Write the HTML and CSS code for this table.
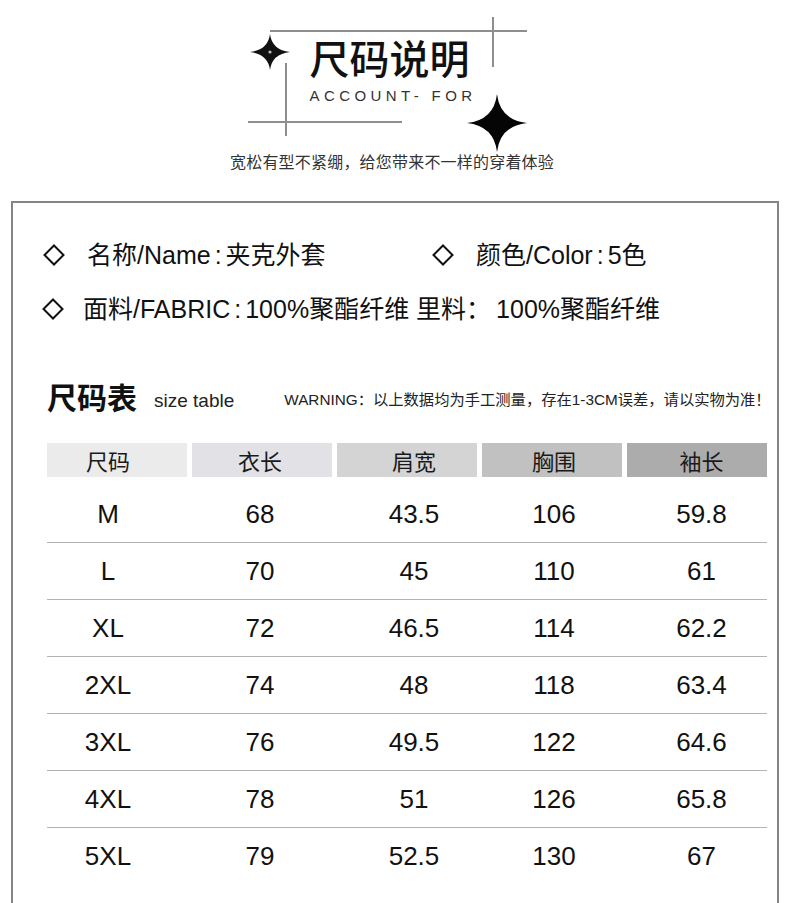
FILE: index.html
```html
<!DOCTYPE html>
<html lang="zh">
<head>
<meta charset="utf-8">
<title>尺码说明</title>
<link rel="stylesheet" href="styles.css">
</head>
<body>
<div class="page">
  <header class="hero">
    <span class="deco line-top"></span>
    <span class="deco line-right"></span>
    <span class="deco line-left"></span>
    <span class="deco line-bottom"></span>
    <svg class="deco star-small" viewBox="-20 -18 40 36" width="40" height="36"><path d="M0,-18 Q2,-2 20,0 Q2,2 0,18 Q-2,2 -20,0 Q-2,-2 0,-18Z" fill="#111"/><circle cx="0" cy="0" r="1.6" fill="#bbb"/></svg>
    <svg class="deco star-big" viewBox="-30 -29 60 58" width="60" height="58"><path d="M0,-29 Q3,-3 30,0 Q3,3 0,29 Q-3,3 -30,0 Q-3,-3 0,-29Z" fill="#050505"/></svg>
    <h1 class="hero-title">尺码说明</h1>
    <div class="hero-en">ACCOUNT- FOR</div>
    <p class="hero-sub">宽松有型不紧绷，给您带来不一样的穿着体验</p>
  </header>

  <section class="box">
    <div class="info-row">
      <div class="info-item first">
        <svg class="diamond" viewBox="0 0 22 22" width="22" height="22"><path d="M11,1.5 L20.5,11 L11,20.5 L1.5,11Z" fill="none" stroke="#111" stroke-width="2"/></svg>
        <span class="info-text">名称/Name<span class="colon">:</span>夹克外套</span>
      </div>
      <div class="info-item">
        <svg class="diamond" viewBox="0 0 22 22" width="22" height="22"><path d="M11,1.5 L20.5,11 L11,20.5 L1.5,11Z" fill="none" stroke="#111" stroke-width="2"/></svg>
        <span class="info-text">颜色/Color<span class="colon">:</span>5色</span>
      </div>
    </div>
    <div class="info-row second">
      <div class="info-item">
        <svg class="diamond" viewBox="0 0 22 22" width="22" height="22"><path d="M11,1.5 L20.5,11 L11,20.5 L1.5,11Z" fill="none" stroke="#111" stroke-width="2"/></svg>
        <span class="info-text">面料/FABRIC<span class="colon">:</span>100%聚酯纤维 里料：<span class="gap"></span>100%聚酯纤维</span>
      </div>
    </div>

    <div class="table-head">
      <h2 class="table-title">尺码表</h2>
      <span class="table-en">size table</span>
      <span class="table-warn">WARNING：以上数据均为手工测量，存在1-3CM误差，请以实物为准！</span>
    </div>

    <div class="size-table">
      <div class="th-row">
        <div class="th c1 bg1">尺码</div>
        <div class="th c2 bg2">衣长</div>
        <div class="th c3 bg3">肩宽</div>
        <div class="th c4 bg4">胸围</div>
        <div class="th c5 bg5">袖长</div>
      </div>
      <div class="tr"><div class="td c1">M</div><div class="td c2">68</div><div class="td c3">43.5</div><div class="td c4">106</div><div class="td c5">59.8</div></div>
      <div class="tr"><div class="td c1">L</div><div class="td c2">70</div><div class="td c3">45</div><div class="td c4">110</div><div class="td c5">61</div></div>
      <div class="tr"><div class="td c1">XL</div><div class="td c2">72</div><div class="td c3">46.5</div><div class="td c4">114</div><div class="td c5">62.2</div></div>
      <div class="tr"><div class="td c1">2XL</div><div class="td c2">74</div><div class="td c3">48</div><div class="td c4">118</div><div class="td c5">63.4</div></div>
      <div class="tr"><div class="td c1">3XL</div><div class="td c2">76</div><div class="td c3">49.5</div><div class="td c4">122</div><div class="td c5">64.6</div></div>
      <div class="tr"><div class="td c1">4XL</div><div class="td c2">78</div><div class="td c3">51</div><div class="td c4">126</div><div class="td c5">65.8</div></div>
      <div class="tr last"><div class="td c1">5XL</div><div class="td c2">79</div><div class="td c3">52.5</div><div class="td c4">130</div><div class="td c5">67</div></div>
    </div>
  </section>
</div>
</body>
</html>
```

FILE: styles.css
```css
* { box-sizing: border-box; }
html, body {
  margin: 0;
  padding: 0;
  background: #fff;
}
body {
  font-family: "Liberation Sans", "Noto Sans CJK SC", sans-serif;
  color: #111;
  width: 790px;
  overflow: hidden;
}
.page {
  width: 790px;
}

/* ---------- hero ---------- */
.hero {
  position: relative;
  height: 201px;
  display: flex;
  flex-direction: column;
  align-items: center;
  padding-top: 33px;
}
.deco {
  position: absolute;
  display: block;
}
.line-top { left: 270px; top: 30px; width: 257px; height: 2px; background: #8e8e8e; }
.line-right { left: 492px; top: 17px; width: 2px; height: 50px; background: #8e8e8e; }
.line-left { left: 285px; top: 63px; width: 2px; height: 73px; background: #8e8e8e; }
.line-bottom { left: 248px; top: 121px; width: 154px; height: 2px; background: #8e8e8e; }
.star-small { left: 250px; top: 34px; }
.star-big { left: 467px; top: 94px; }

.hero-title {
  margin: 0 0 0 -11px;
  font-family: "Noto Sans CJK SC", sans-serif;
  font-size: 40px;
  font-weight: 500;
  line-height: 48px;
  letter-spacing: 0;
  color: #111;
}
.hero-en {
  margin-top: 5px;
  margin-left: -4px;
  font-size: 15px;
  line-height: 20px;
  letter-spacing: 4.4px;
  color: #333;
}
.hero-sub {
  margin: 45px 0 0 -6px;
  font-family: "Noto Sans CJK SC", sans-serif;
  font-size: 16px;
  line-height: 20px;
  letter-spacing: 0.2px;
  color: #333;
}

/* ---------- box ---------- */
.box {
  margin-left: 11px;
  width: 768px;
  border: 2px solid #858585;
  border-bottom: none;
  padding: 37px 0 80px 30px;
}
.info-row {
  display: flex;
  align-items: center;
  height: 30px;
}
.info-row.second {
  margin-top: 24px;
}
.info-item {
  display: flex;
  align-items: center;
  gap: 22px;
}
.info-item.first {
  width: 389px;
}
.info-row.second .info-item {
  gap: 19px;
}
.diamond {
  flex: none;
  display: block;
}
.info-row.second .diamond {
  margin-left: -1px;
}
.info-text {
  font-size: 25px;
  line-height: 30px;
  color: #111;
  white-space: nowrap;
}
.colon {
  margin: 0 4px;
}
.gap {
  display: inline-block;
  width: 5px;
}

/* ---------- table header ---------- */
.table-head {
  margin-top: 55px;
  margin-left: 4px;
  display: flex;
  align-items: flex-start;
  height: 34px;
}
.table-title {
  margin: 0;
  font-family: "Noto Sans CJK SC", sans-serif;
  font-size: 30px;
  font-weight: 700;
  line-height: 34px;
  color: #111;
}
.table-en {
  margin-left: 17px;
  margin-top: 10px;
  font-size: 19px;
  line-height: 24px;
  color: #222;
}
.table-warn {
  margin-left: 50px;
  margin-top: 11px;
  font-size: 15.3px;
  line-height: 20px;
  color: #222;
  white-space: nowrap;
}

/* ---------- size table ---------- */
.size-table {
  margin-top: 30px;
  margin-left: 4px;
  width: 720px;
}
.th-row, .tr {
  display: grid;
  grid-template-columns: repeat(5, 140px);
  column-gap: 5px;
}
.th-row {
  height: 34px;
  margin-bottom: 9px;
}
.th {
  display: flex;
  align-items: center;
  justify-content: center;
  font-family: "Noto Sans CJK SC", sans-serif;
  font-size: 22px;
  color: #1a1a1a;
}
.bg1 { background: #ebebec; }
.bg2 { background: #e2e2e6; }
.bg3 { background: #d4d4d4; }
.bg4 { background: #c1c1c1; }
.bg5 { background: #acacac; }

.tr {
  height: 57px;
  border-bottom: 1px solid #b3b3b3;
  align-items: center;
}
.tr.last {
  border-bottom: none;
}
.td {
  text-align: center;
  font-size: 26px;
  color: #111;
}
.c1 { padding-right: 18px; }
.c2 { padding-right: 4px; }
.c3 { padding-left: 14px; }
.c4 { padding-left: 4px; }
.c5 { padding-left: 9px; }
```
